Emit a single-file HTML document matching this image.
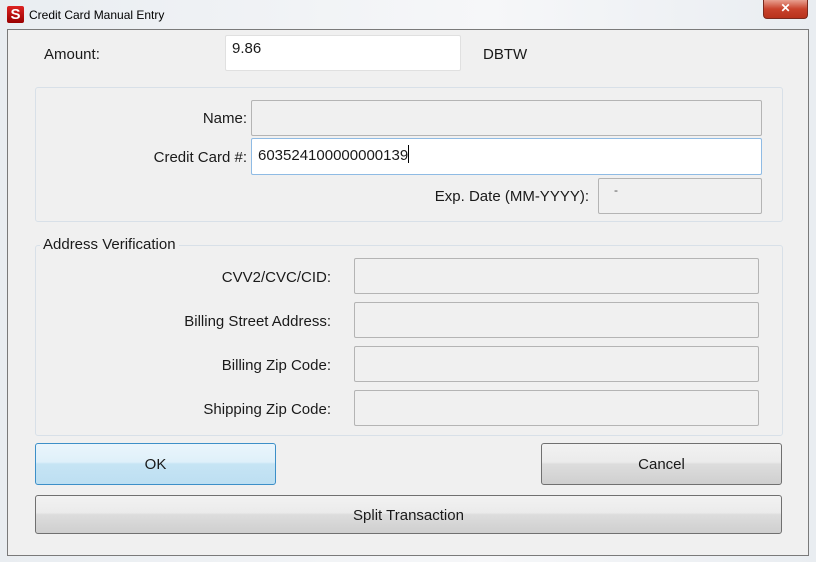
<!DOCTYPE html>
<html><head><style>
*{box-sizing:border-box;margin:0;padding:0}
body{width:816px;height:562px;overflow:hidden;background:linear-gradient(90deg,#e9edf1,#f6f7f9 60%,#e9edf1);font-family:"Liberation Sans",sans-serif;font-size:15px;color:#1a1a1a;position:relative}
.a{position:absolute}
.lbl{position:absolute;text-align:right;line-height:20px}
.in{position:absolute;border:1px solid #b4b4b4;background:#f0f0f0;border-radius:2px}
.btn{position:absolute;border:1px solid #707070;border-radius:3px;background:linear-gradient(#f2f2f2 0,#ebebeb 45%,#dddddd 50%,#cfcfcf 100%);text-align:center}
.grp{position:absolute;border:1px solid #d8e0e8;border-radius:3px}
</style></head><body>
<div class="a" style="left:7px;top:6px;width:17px;height:17px;background:linear-gradient(#d22,#900);color:#fff;font-weight:bold;font-size:15px;line-height:17px;text-align:center;border-radius:2px">S</div>
<div class="a" style="left:29px;top:7px;font-size:12px;line-height:16px;color:#000">Credit Card Manual Entry</div>
<div class="a" style="left:763px;top:0;width:45px;height:19px;background:linear-gradient(#e8a090,#c9432c 50%,#b8321c);border:1px solid #7a2a1e;border-top:none;border-radius:0 0 4px 4px;color:#fff;text-align:center;font-weight:bold;font-size:12px;line-height:17px">✕</div>
<div class="a" style="left:7px;top:29px;width:802px;height:527px;background:#f0f0f0;border:1px solid #7a7a7a"></div>
<div class="lbl" style="left:44px;top:45px;text-align:left">Amount:</div>
<div class="in" style="left:225px;top:35px;width:236px;height:36px;background:#fff;border-color:#e0e0e0;padding:3px 6px;line-height:20px">9.86</div>
<div class="lbl" style="left:483px;top:45px;text-align:left">DBTW</div>
<div class="grp" style="left:35px;top:87px;width:748px;height:135px"></div>
<div class="lbl" style="left:90px;top:109px;width:157px">Name:</div>
<div class="in" style="left:251px;top:100px;width:511px;height:36px"></div>
<div class="lbl" style="left:90px;top:148px;width:157px">Credit Card #:</div>
<div class="in" style="left:251px;top:138px;width:511px;height:37px;background:#fff;border-color:#8fbbe4;padding:6px 6px;line-height:20px">603524100000000139<span style="display:inline-block;width:1px;height:18px;background:#000;vertical-align:-3px"></span></div>
<div class="lbl" style="left:370px;top:187px;width:219px">Exp. Date (MM-YYYY):</div>
<div class="in" style="left:598px;top:178px;width:164px;height:36px;padding:4px 15px;line-height:14px;font-size:12px;color:#555">-</div>
<div class="grp" style="left:35px;top:245px;width:748px;height:191px"></div>
<div class="lbl" style="left:40px;top:235px;text-align:left;background:#f0f0f0;padding:0 3px">Address Verification</div>
<div class="lbl" style="left:110px;top:268px;width:221px">CVV2/CVC/CID:</div>
<div class="in" style="left:354px;top:258px;width:405px;height:36px"></div>
<div class="lbl" style="left:110px;top:312px;width:221px">Billing Street Address:</div>
<div class="in" style="left:354px;top:302px;width:405px;height:36px"></div>
<div class="lbl" style="left:110px;top:356px;width:221px">Billing Zip Code:</div>
<div class="in" style="left:354px;top:346px;width:405px;height:36px"></div>
<div class="lbl" style="left:110px;top:400px;width:221px">Shipping Zip Code:</div>
<div class="in" style="left:354px;top:390px;width:405px;height:36px"></div>
<div class="btn" style="left:35px;top:443px;width:241px;height:42px;border-color:#3c8fc8;background:linear-gradient(#eaf5fc 0,#dff0fa 45%,#c6e4f4 50%,#bddff2 100%);line-height:42px">OK</div>
<div class="btn" style="left:541px;top:443px;width:241px;height:42px;line-height:42px">Cancel</div>
<div class="btn" style="left:35px;top:495px;width:747px;height:39px;line-height:39px">Split Transaction</div>
</body></html>
